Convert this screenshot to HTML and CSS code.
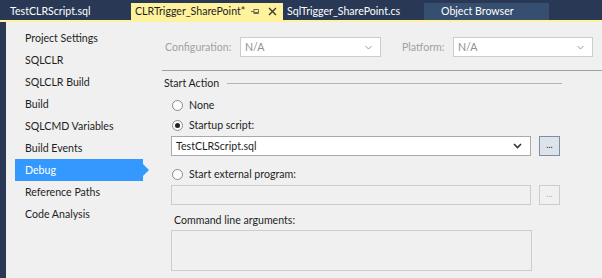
FILE: index.html
```html
<!DOCTYPE html>
<html lang="en">
<head>
    <meta charset="UTF-8">
    <title>CLRTrigger_SharePoint - Debug</title>
    <link rel="stylesheet" href="styles.css">
</head>
<body>
    <div class="tab-strip">
        <div class="tab">TestCLRScript.sql</div>
        <div class="tab active">
            <span class="tab-title">CLRTrigger_SharePoint*</span>
            <svg class="pin" width="9" height="9" viewBox="0 0 9 9" fill="none" stroke="currentColor" stroke-width="1">
                <path d="M0 4.5h3M3 2v5M3 2.5h4.5v4H3M3 5.5h4.5"></path>
            </svg>
            <svg class="close" width="9" height="9" viewBox="0 0 9 9" stroke="currentColor" stroke-width="1.4">
                <path d="M1 1l7 7M8 1l-7 7"></path>
            </svg>
        </div>
        <div class="tab">SqlTrigger_SharePoint.cs</div>
        <div class="tab hover">Object Browser</div>
    </div>

    <div class="workspace">
        <div class="edge"></div>

        <ul class="nav">
            <li>Project Settings</li>
            <li>SQLCLR</li>
            <li>SQLCLR Build</li>
            <li>Build</li>
            <li>SQLCMD Variables</li>
            <li>Build Events</li>
            <li class="selected">Debug</li>
            <li>Reference Paths</li>
            <li>Code Analysis</li>
        </ul>

        <div class="page">
            <div class="config-row">
                <label class="muted config-label">Configuration:</label>
                <div class="combo disabled config-combo">
                    <span>N/A</span>
                    <svg class="chev" width="7" height="5" viewBox="0 0 7 5" fill="none" stroke="currentColor" stroke-width="1"><path d="M0.5 1l3 3 3-3"></path></svg>
                </div>
                <label class="muted platform-label">Platform:</label>
                <div class="combo disabled platform-combo">
                    <span>N/A</span>
                    <svg class="chev" width="7" height="5" viewBox="0 0 7 5" fill="none" stroke="currentColor" stroke-width="1"><path d="M0.5 1l3 3 3-3"></path></svg>
                </div>
            </div>

            <div class="separator"></div>

            <div class="group-title">
                <span>Start Action</span>
                <div class="group-line"></div>
            </div>

            <div class="options">
                <div class="radio-row"><span class="radio"></span>None</div>
                <div class="radio-row"><span class="radio checked"></span>Startup script:</div>
                <div class="field-row">
                    <div class="combo script-combo">
                        <span>TestCLRScript.sql</span>
                        <svg class="chev dark" width="9" height="6" viewBox="0 0 9 6" fill="none" stroke="currentColor" stroke-width="1.6"><path d="M1 1l3.5 3.5 3.5-3.5"></path></svg>
                    </div>
                    <button class="browse active-btn">...</button>
                </div>
                <div class="radio-row"><span class="radio"></span>Start external program:</div>
                <div class="field-row">
                    <div class="textbox disabled"></div>
                    <button class="browse" disabled>...</button>
                </div>
                <div class="args-label">Command line arguments:</div>
                <div class="textarea disabled"></div>
            </div>
        </div>
    </div>
</body>
</html>
```

FILE: styles.css
```css
:root {
    --navy: #293955;
    --navy-light: #364e6f;
    --tab-yellow: #fff29d;
    --panel-bg: #f0f0f0;
    --text: #1e1e1e;
    --text-muted: #a2a2a2;
    --border: #a9a9a9;
    --border-light: #cccccc;
    --select-blue: #3399ff;
}

* {
    box-sizing: border-box;
}

body {
    margin: 0;
    width: 602px;
    height: 278px;
    overflow: hidden;
    font-family: Lato, "Open Sans", sans-serif;
    font-size: 10.6px;
    color: var(--text);
    background-color: var(--panel-bg);
}

/* Document tabs */
.tab-strip {
    display: flex;
    align-items: flex-end;
    height: 22px;
    padding-left: 4px;
    background-color: var(--navy);
    border-bottom: 2px solid var(--tab-yellow);
    font-size: 10.6px;
}

.tab {
    flex-shrink: 0;
    height: 17px;
    padding: 0 6px;
    color: #ffffff;
    line-height: 17px;
    white-space: nowrap;
    overflow: hidden;
}

.tab:first-child {
    width: 127px;
}

.tab.active {
    display: flex;
    align-items: center;
    width: 152px;
    padding: 0 6px 0 4px;
    background-color: var(--tab-yellow);
    color: #1e1e1e;
}

.tab-title {
    flex: 1;
}

.tab.active svg {
    flex-shrink: 0;
}

.tab.active .pin {
    margin-right: 8px;
    color: #6d6a55;
}

.tab.active .close {
    color: #3c3a2e;
}

.tab:nth-child(3) {
    width: 141px;
    padding-left: 4px;
}

.tab.hover {
    width: 125px;
    padding-left: 17px;
    background-color: var(--navy-light);
}

/* Main area */
.workspace {
    display: flex;
    height: 256px;
}

.edge {
    width: 6px;
    background-color: var(--navy);
}

.nav {
    list-style: none;
    margin: 0;
    padding: 5px 0 0 9px;
    width: 156px;
}

.nav li {
    height: 22px;
    padding-left: 10px;
    line-height: 22px;
    white-space: nowrap;
}

.nav li.selected {
    position: relative;
    width: 128px;
    background-color: var(--select-blue);
    color: #ffffff;
}

.nav li.selected::after {
    content: '';
    position: absolute;
    right: -6px;
    top: 5px;
    border-top: 6px solid transparent;
    border-bottom: 6px solid transparent;
    border-left: 6px solid var(--select-blue);
}

.page {
    flex: 1;
}

.config-row {
    display: flex;
    align-items: center;
    height: 20px;
    margin-top: 15px;
    padding-left: 3px;
}

.muted {
    color: var(--text-muted);
}

.config-label {
    width: 75px;
}

.combo {
    display: flex;
    align-items: center;
    justify-content: space-between;
    height: 20px;
    padding: 0 8px 0 4px;
    background-color: #ffffff;
    border: 1px solid var(--border);
}

.combo.disabled {
    border-color: var(--border-light);
    color: #8f8f8f;
}

.config-combo {
    width: 141px;
}

.platform-label {
    width: 51px;
    margin-left: 21px;
}

.platform-combo {
    width: 140px;
}

.chev {
    color: #9a9a9a;
}

.chev.dark {
    color: #333333;
}

.separator {
    height: 1px;
    margin-top: 13px;
    background-color: #a0a0a0;
}

.group-title {
    display: flex;
    align-items: center;
    gap: 8px;
    width: 400px;
    height: 16px;
    margin-top: 4px;
    padding-left: 2px;
}

.group-line {
    flex: 1;
    height: 1px;
    background-color: #b5b5b5;
}

.options {
    padding-left: 9px;
    padding-top: 4px;
}

.radio-row {
    display: flex;
    align-items: center;
    gap: 6px;
    height: 20px;
    padding-left: 1px;
}

.radio {
    position: relative;
    width: 11px;
    height: 11px;
    border: 1px solid #8a8a8a;
    border-radius: 50%;
    background-color: #ffffff;
}

.radio.checked::after {
    content: '';
    position: absolute;
    left: 2px;
    top: 2px;
    width: 5px;
    height: 5px;
    border-radius: 50%;
    background-color: #222222;
}

.field-row {
    display: flex;
    align-items: center;
    gap: 8px;
    margin: 1px 0 8px;
}

.script-combo {
    width: 360px;
    padding-left: 4px;
    color: #1e1e1e;
}

.textbox {
    width: 360px;
    height: 20px;
    border: 1px solid var(--border-light);
    background-color: var(--panel-bg);
}

.browse {
    width: 21px;
    height: 20px;
    padding: 0 0 4px;
    font-family: inherit;
    font-size: 9px;
    color: #222222;
    background-color: #f0f0f0;
    border: 1px solid var(--border-light);
}

.browse.active-btn {
    background-color: #dde3ea;
    border: 1px solid #7a8ea5;
}

.browse:disabled {
    color: #b0b0b0;
}

.args-label {
    height: 14px;
    line-height: 14px;
    padding-left: 3px;
}

.textarea {
    width: 361px;
    height: 41px;
    margin-top: 3px;
    border: 1px solid var(--border-light);
    background-color: var(--panel-bg);
}
```
